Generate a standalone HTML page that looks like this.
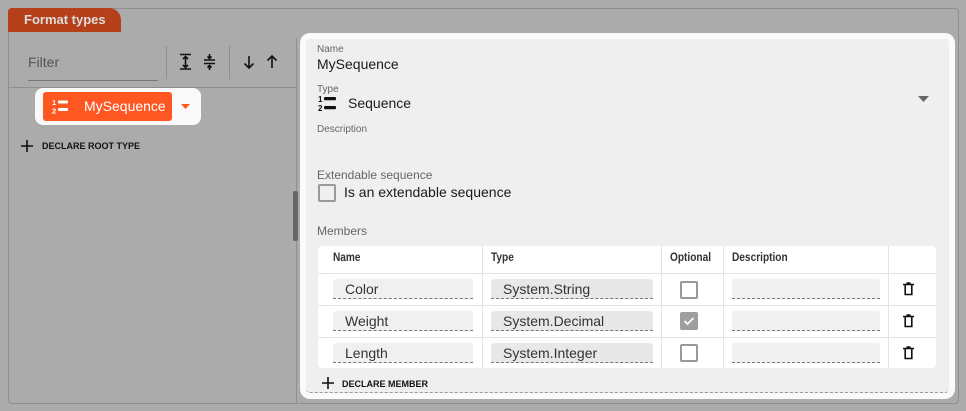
<!DOCTYPE html><html><head><style>
*{box-sizing:border-box;margin:0;padding:0}
body{width:966px;height:411px;background:#ababab;font-family:"Liberation Sans",sans-serif;position:relative;overflow:hidden;color:#1a1a1a}
.a{position:absolute}
.lbl{font-size:10px;color:#666}
.th{font-size:11.5px;font-weight:bold;color:#333;transform:scaleX(.88);transform-origin:left}
.inp{position:absolute;height:20px;background:#e8e8e8;border-bottom:1px dashed #777;font-size:14px;color:#333;padding:2px 0 0 12px;border-radius:3px 3px 0 0}
.cb{position:absolute;width:18px;height:18px;border:2px solid #999;border-radius:2px;background:#fff}
.vl{position:absolute;top:0;bottom:0;width:1px;background:#e4e4e4}
.hl{position:absolute;left:0;right:0;height:1px;background:#e4e4e4}
</style></head><body>
<div class="a" style="left:8px;top:8px;width:951px;height:396px;border:1px solid #8f8f8f;border-radius:4px"></div>
<div class="a" style="left:8px;top:8px;width:113px;height:24px;background:#b5401a;border-radius:4px 12px 0 0;color:#ddd;font-weight:bold;font-size:13px;padding:4px 0 0 16px">Format types</div>
<div class="a" style="left:28px;top:54px;font-size:14px;color:#555">Filter</div>
<div class="a" style="left:28px;top:80px;width:130px;height:1px;background:#777"></div>
<div class="a" style="left:166px;top:46px;width:1px;height:33px;background:#8f8f8f"></div>
<div class="a" style="left:229px;top:46px;width:1px;height:33px;background:#8f8f8f"></div>
<svg class="a" style="left:178px;top:53px" width="40" height="18" viewBox="0 0 40 18" fill="none" stroke="#111" stroke-width="1.6"><path d="M2 1.5h11M2 16h11M7.5 4v10M5 6l2.5-2.5L10 6M5 12l2.5 2.5L10 12"/><path d="M26 7h11M26 10.5h11M31.5 1v5M29.5 3.5l2 2 2-2M31.5 17v-5M29.5 14.5l2-2 2 2"/></svg>
<svg class="a" style="left:242px;top:55px" width="40" height="14" viewBox="0 0 40 14" fill="none" stroke="#111" stroke-width="1.6"><path d="M7 1v12M2.5 8.5L7 13l4.5-4.5M30 13V1M25.5 5.5L30 1l4.5 4.5"/></svg>
<div class="a" style="left:8px;top:87px;width:288px;height:1px;background:#8f8f8f"></div>
<div class="a" style="left:296px;top:38px;width:1px;height:365px;background:#8f8f8f"></div>
<div class="a" style="left:293px;top:191px;width:5px;height:50px;background:#666;border-radius:2px"></div>
<div class="a" style="left:35px;top:88px;width:166px;height:37px;background:#fafafa;border-radius:8px"></div>
<div class="a" style="left:43px;top:92px;width:129px;height:29px;background:#ff5722;border-radius:3px;color:#fff;font-size:14px;padding:6px 0 0 41px">MySequence</div>
<svg class="a" style="left:52px;top:98px" width="18" height="16" viewBox="0 0 18 16" fill="#fff"><text x="0" y="7" font-size="7.5" font-weight="bold" font-family="Liberation Sans">1</text><text x="0" y="15.5" font-size="7.5" font-weight="bold" font-family="Liberation Sans">2</text><rect x="6" y="2.5" width="10" height="3" rx="1"/><rect x="6" y="10" width="10" height="3" rx="1"/></svg>
<svg class="a" style="left:181px;top:104px" width="9" height="5"><path d="M0 0h9L4.5 5z" fill="#ff5722"/></svg>
<svg class="a" style="left:21px;top:140px" width="12" height="12"><path d="M6 0v12M0 6h12" stroke="#111" stroke-width="1.6"/></svg>
<div class="a" style="left:42px;top:141px;font-size:9px;font-weight:bold;color:#111">DECLARE ROOT TYPE</div>

<div class="a" style="left:300px;top:33px;width:655px;height:366px;background:#fafafa;border-radius:10px"></div>
<div class="a" style="left:306px;top:39px;width:643px;height:354px;background:#efefef;border-radius:4px;border-bottom:1px dashed #999"></div>
<div class="a lbl" style="left:317px;top:44px">Name</div>
<div class="a" style="left:317px;top:56px;font-size:14px">MySequence</div>
<div class="a lbl" style="left:317px;top:84px">Type</div>
<svg class="a" style="left:317px;top:95px" width="24" height="18" viewBox="0 0 24 18" fill="#111"><text x="1" y="7" font-size="8" font-weight="bold" font-family="Liberation Sans">1</text><text x="1" y="16" font-size="8" font-weight="bold" font-family="Liberation Sans">2</text><rect x="7" y="2" width="12" height="3.2" rx="1"/><rect x="7" y="11" width="12" height="3.2" rx="1"/></svg>
<div class="a" style="left:348px;top:95px;font-size:14px">Sequence</div>
<svg class="a" style="left:918px;top:96px" width="11" height="6"><path d="M0 0h11L5.5 6z" fill="#666"/></svg>
<div class="a lbl" style="left:317px;top:124px">Description</div>
<div class="a" style="left:317px;top:168px;font-size:12px;color:#666">Extendable sequence</div>
<div class="cb" style="left:318px;top:184px;background:transparent"></div>
<div class="a" style="left:344px;top:184px;font-size:14px">Is an extendable sequence</div>
<div class="a" style="left:317px;top:224px;font-size:12px;color:#666">Members</div>

<div class="a" style="left:318px;top:246px;width:618px;height:122px;background:#fff;border-radius:4px">
<div class="vl" style="left:164px"></div><div class="vl" style="left:343px"></div><div class="vl" style="left:405px"></div><div class="vl" style="left:570px"></div>
<div class="hl" style="top:27px"></div><div class="hl" style="top:59px"></div><div class="hl" style="top:91px"></div>
<div class="a th" style="left:15px;top:6px">Name</div>
<div class="a th" style="left:173px;top:6px">Type</div>
<div class="a th" style="left:352px;top:6px">Optional</div>
<div class="a th" style="left:414px;top:6px">Description</div>
</div>
<div class="inp" style="left:333px;top:279px;width:140px;background:#f0f0f0">Color</div>
<div class="inp" style="left:333px;top:311px;width:140px;background:#f0f0f0">Weight</div>
<div class="inp" style="left:333px;top:343px;width:140px;background:#f0f0f0">Length</div>
<div class="inp" style="left:491px;top:279px;width:162px">System.String</div>
<div class="inp" style="left:491px;top:311px;width:162px">System.Decimal</div>
<div class="inp" style="left:491px;top:343px;width:162px">System.Integer</div>
<div class="cb" style="left:680px;top:281px"></div>
<div class="cb" style="left:680px;top:312px;background:#9e9e9e;border-color:#9e9e9e"><svg width="14" height="14" style="position:absolute;left:0;top:0"><path d="M2.5 7l3 3 6-6" stroke="#fff" stroke-width="1.6" fill="none"/></svg></div>
<div class="cb" style="left:680px;top:344px"></div>
<div class="inp" style="left:732px;top:279px;width:148px;background:#f0f0f0"></div>
<div class="inp" style="left:732px;top:311px;width:148px;background:#f0f0f0"></div>
<div class="inp" style="left:732px;top:343px;width:148px;background:#f0f0f0"></div>
<svg class="a" style="left:903px;top:282px" width="11" height="14" viewBox="0 0 11 14" fill="none" stroke="#111" stroke-width="1.6"><path d="M0 2.5h11M3.5 1h4M2.2 3v9.5h6.6V3"/></svg>
<svg class="a" style="left:903px;top:314px" width="11" height="14" viewBox="0 0 11 14" fill="none" stroke="#111" stroke-width="1.6"><path d="M0 2.5h11M3.5 1h4M2.2 3v9.5h6.6V3"/></svg>
<svg class="a" style="left:903px;top:346px" width="11" height="14" viewBox="0 0 11 14" fill="none" stroke="#111" stroke-width="1.6"><path d="M0 2.5h11M3.5 1h4M2.2 3v9.5h6.6V3"/></svg>
<svg class="a" style="left:322px;top:377px" width="12" height="12"><path d="M6 0v12M0 6h12" stroke="#111" stroke-width="1.6"/></svg>
<div class="a" style="left:342px;top:379px;font-size:9px;font-weight:bold;color:#111">DECLARE MEMBER</div>
</body></html>
